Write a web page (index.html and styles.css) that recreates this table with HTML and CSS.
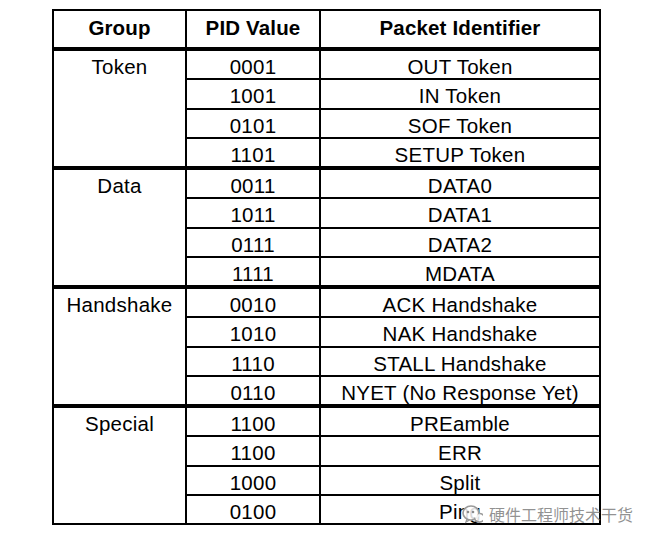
FILE: index.html
```html
<!DOCTYPE html>
<html lang="en">
<head>
<meta charset="utf-8">
<title>USB PID Table</title>
<link rel="stylesheet" href="styles.css">
</head>
<body>
<div class="page">
  <table class="pid">
    <thead>
      <tr class="head"><th class="c1">Group</th><th class="c2">PID Value</th><th class="c3">Packet Identifier</th></tr>
    </thead>
    <tbody class="grp first">
      <tr class="r1"><td class="g" rowspan="4">Token</td><td class="v">0001</td><td class="p">OUT Token</td></tr>
      <tr class="r2"><td class="v">1001</td><td class="p">IN Token</td></tr>
      <tr class="r3"><td class="v">0101</td><td class="p">SOF Token</td></tr>
      <tr class="r4"><td class="v">1101</td><td class="p">SETUP Token</td></tr>
    </tbody>
    <tbody class="grp">
      <tr class="r1"><td class="g" rowspan="4">Data</td><td class="v">0011</td><td class="p">DATA0</td></tr>
      <tr class="r2"><td class="v">1011</td><td class="p">DATA1</td></tr>
      <tr class="r3"><td class="v">0111</td><td class="p">DATA2</td></tr>
      <tr class="r4"><td class="v">1111</td><td class="p">MDATA</td></tr>
    </tbody>
    <tbody class="grp">
      <tr class="r1"><td class="g" rowspan="4">Handshake</td><td class="v">0010</td><td class="p">ACK Handshake</td></tr>
      <tr class="r2"><td class="v">1010</td><td class="p">NAK Handshake</td></tr>
      <tr class="r3"><td class="v">1110</td><td class="p">STALL Handshake</td></tr>
      <tr class="r4"><td class="v">0110</td><td class="p">NYET (No Response Yet)</td></tr>
    </tbody>
    <tbody class="grp">
      <tr class="r1"><td class="g" rowspan="4">Special</td><td class="v">1100</td><td class="p">PREamble</td></tr>
      <tr class="r2"><td class="v">1100</td><td class="p">ERR</td></tr>
      <tr class="r3"><td class="v">1000</td><td class="p">Split</td></tr>
      <tr class="r4"><td class="v">0100</td><td class="p">Ping</td></tr>
    </tbody>
  </table>
  <div class="watermark">
    <svg class="wm-icon" width="21" height="20" viewBox="0 0 21 20">
      <ellipse cx="9" cy="9" rx="8" ry="7" fill="rgba(255,255,255,0.85)" stroke="#9a9a9a" stroke-width="1.6"/>
      <circle cx="6" cy="8" r="1.3" fill="#8a8a8a"/>
      <circle cx="11" cy="8" r="1.3" fill="#8a8a8a"/>
      <path d="M12.5 13.5 a5 4.3 0 1 0 5 -4" fill="rgba(255,255,255,0.85)" stroke="#9a9a9a" stroke-width="1.6"/>
      <path d="M5 15 l-1 3 3.5-2" fill="none" stroke="#9a9a9a" stroke-width="1.4"/>
    </svg>
    <span class="wm-text">硬件工程师技术干货</span>
  </div>
</div>
</body>
</html>
```

FILE: styles.css
```css
html, body {
  margin: 0;
  padding: 0;
  background: #ffffff;
}

.page {
  position: relative;
  width: 653px;
  height: 542px;
  padding: 9px 0 0 52px;
  box-sizing: border-box;
}

.pid {
  border-collapse: separate;
  border-spacing: 0;
  border: 2px solid #000;
  table-layout: fixed;
  width: 549px;
  box-sizing: border-box;
  font-family: "Liberation Sans", Arial, sans-serif;
  font-size: 20.5px;
  color: #000;
}

.pid th,
.pid td {
  box-sizing: border-box;
  padding: 5px 0 0 0;
  line-height: 22px;
  text-align: center;
  vertical-align: top;
  white-space: nowrap;
}

.pid td {
  letter-spacing: 0.25px;
}

.pid th {
  font-size: 20.5px;
  letter-spacing: 0.15px;
  font-weight: bold;
  padding-top: 6px;
  border-bottom: 4px solid #000;
}

.c1 { width: 131px; }
.c2 { width: 134px; border-left: 2px solid #000; }
.c3 { width: 280px; border-left: 2px solid #000; }

.pid td.v,
.pid td.p {
  border-left: 2px solid #000;
}

.head { height: 40px; }

.r1 { height: 31px; }
.r2 { height: 30px; }
.r3 { height: 29px; }
.r4 { height: 29px; }

.grp.first .r1 { height: 27px; }

.grp .r1 td { border-top: 4px solid #000; }
.grp.first .r1 td { border-top: 0; }

.r2 td, .r3 td, .r4 td { border-top: 2px solid #000; }

.watermark {
  position: absolute;
  left: 462px;
  top: 504px;
  display: flex;
  align-items: center;
  gap: 6px;
}

.wm-icon {
  display: block;
}

.wm-text {
  font-family: "Noto Sans CJK SC", sans-serif;
  font-size: 16px;
  line-height: 18px;
  color: rgba(110, 110, 110, 0.75);
  letter-spacing: 0;
}
```
